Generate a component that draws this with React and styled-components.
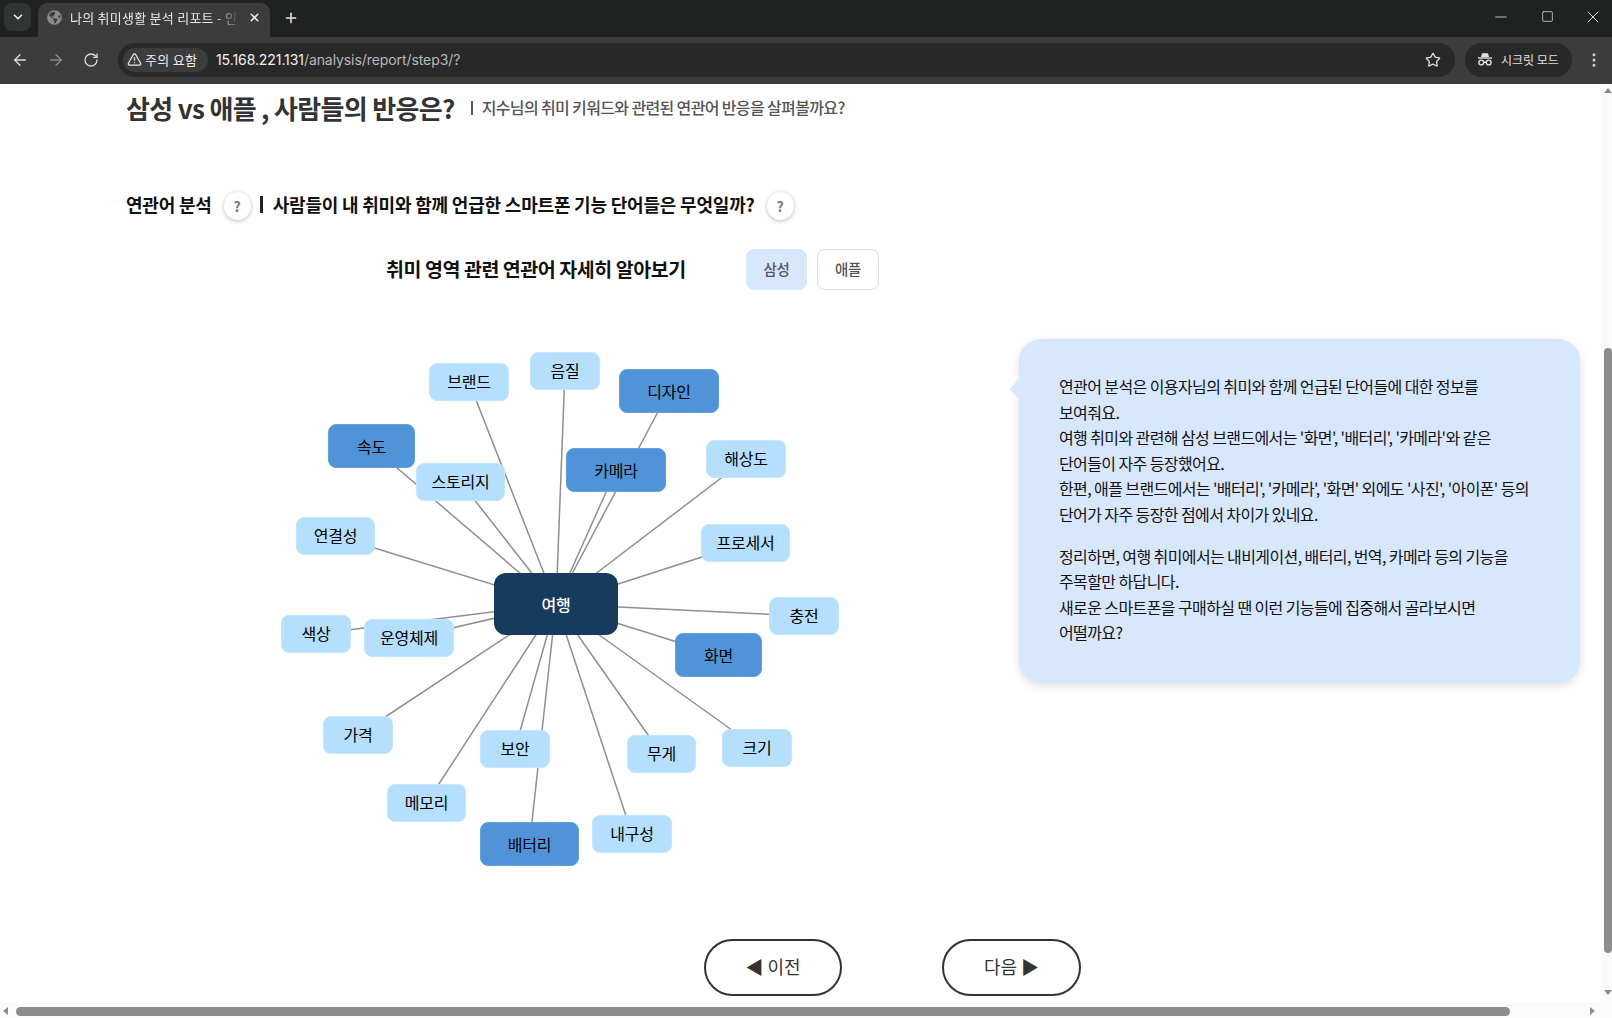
import React from 'react';
import styled, { createGlobalStyle } from 'styled-components';
import { ArrowLeft, ArrowRight, RotateCw, Star, TriangleAlert, Minus, Square, X, Plus, ChevronDown, EllipsisVertical } from 'lucide-react';
import { FaGlobeAmericas } from 'react-icons/fa';

const Global = createGlobalStyle`
  html, body { margin: 0; padding: 0; overflow: hidden; background: #fff; }
  * { box-sizing: border-box; }
  body { font-family: "Noto Sans CJK KR", "Noto Sans", sans-serif; }
`;

const Window = styled.div`
  width: 1612px; height: 1018px; display: flex; flex-direction: column; overflow: hidden;
`;
const TabStrip = styled.div`
  height: 37px; background: #202222; display: flex; align-items: flex-end; flex: none; color: #e8e8e8;
`;
const TabMenu = styled.div`
  width: 27px; height: 28px; margin: 0 7px 6px 4px; border-radius: 8px; background: #323434;
  display: flex; align-items: center; justify-content: center;
`;
const Tab = styled.div`
  width: 232px; height: 34px; background: #3c3c3c; border-radius: 9px 9px 0 0;
  display: flex; align-items: center; padding: 0 9px 5px; gap: 8px;
`;
const TabTitle = styled.div`
  flex: 1; font-size: 13px; white-space: nowrap; overflow: hidden; color: #e6e6e6; line-height: 18px; letter-spacing: 0.25px;
  -webkit-mask-image: linear-gradient(90deg, #000 86%, transparent);
  mask-image: linear-gradient(90deg, #000 86%, transparent);
`;
const NewTab = styled.div`
  margin: 0 0 11px 11px; width: 20px; display: flex; justify-content: center; flex: none;
`;
const WindowControls = styled.div`
  margin-left: auto; display: flex; align-self: flex-start; height: 33px; align-items: center;
  gap: 26px; padding-right: 9px;
`;
const ControlCell = styled.div`
  width: 20px; display: flex; justify-content: center;
`;
const Toolbar = styled.div`
  height: 47px; background: #3c3c3c; display: flex; align-items: center; flex: none; color: #d8d8d8; padding: 0 0 1px 11px;
`;
const NavIcons = styled.div`
  display: flex; gap: 18px; width: 107px; align-items: center;
`;
const Address = styled.div`
  width: 1337px; height: 34px; border-radius: 17px; background: #282828;
  display: flex; align-items: center; padding: 0 14px 0 5px;
`;
const Chip = styled.div`
  height: 24px; width: 85px; border-radius: 12px; background: #3c3c3c; color: #eee;
  display: flex; align-items: center; gap: 3px; font-size: 13px; letter-spacing: 0.3px; padding: 0 0 2px 4px; white-space: nowrap; flex: none;
`;
const Url = styled.div`
  margin: 0 0 1px 8px; font-family: "Inter", "Noto Sans", sans-serif; font-size: 14px; color: #b9b9b9; letter-spacing: -0.08px;
  b { font-weight: 400; color: #f0f0f0; }
`;
const StarWrap = styled.div`
  margin-left: auto; display: flex;
`;
const Incognito = styled.div`
  margin-left: 10px; width: 107px; height: 34px; border-radius: 17px; background: #282828; color: #e0e0e0;
  display: flex; align-items: center; gap: 8px; padding: 0 0 2px 12px; font-size: 12px; white-space: nowrap; flex: none;
`;
const MenuWrap = styled.div`
  margin-left: 13px; display: flex; color: #cfcfcf;
`;

const Viewport = styled.div`
  flex: 1; min-height: 0; display: flex; background: #fff;
`;
const Main = styled.main`
  flex: 1; min-width: 0; padding-left: 126px; overflow: hidden;
`;
const TitleRow = styled.div`
  height: 48px; display: flex; align-items: center;
`;
const Title = styled.h1`
  margin: 0; font-size: 26px; font-weight: 700; color: #333; letter-spacing: -0.68px; white-space: nowrap; line-height: 48px;
`;
const SubDivider = styled.span`
  width: 2px; height: 14px; margin: 0 9px 0 16px; background: #555; flex: none;
`;
const Subtitle = styled.span`
  font-size: 16px; font-weight: 500; color: #555; letter-spacing: -0.64px; white-space: nowrap; padding-bottom: 2px;
`;
const SectionRow = styled.div`
  margin-top: 57px; height: 32px; padding-bottom: 2px; display: flex; align-items: center; color: #111;
  font-size: 18px; font-weight: 700; letter-spacing: -0.2px; white-space: nowrap;
`;
const Help = styled.span`
  width: 27px; height: 28px; border-radius: 50%; background: #fff; color: #777;
  box-shadow: 0 1px 4px rgba(0,0,0,.28); display: inline-flex; align-items: center; justify-content: center;
  font-size: 14px; font-weight: 700; margin: 4px 0 0 ${p => p.$ml}px; letter-spacing: 0;
`;
const Divider = styled.span`
  margin: 0 10px 0 9px; width: 3px; height: 17px; background: #222;
`;
const FilterRow = styled.div`
  margin-top: 28px; height: 41px; display: flex; align-items: center; padding-left: 260px;
`;
const FilterTitle = styled.h2`
  margin: 0 0 3px; width: 360px; font-size: 19.5px; font-weight: 700; color: #111; letter-spacing: -0.45px; white-space: nowrap;
`;
const Brand = styled.button`
  width: 61px; height: 41px; margin-right: 10px; border-radius: 8px; font: inherit; font-size: 14.5px; font-weight: 500; color: #555; letter-spacing: -0.3px;
  padding: 0 0 3px;
  background: ${p => (p.$active ? '#d7e7fe' : '#fff')};
  border: 1px solid ${p => (p.$active ? '#d7e7fe' : '#dcdcdc')};
  &:last-child { width: 62px; }
`;
const ContentRow = styled.div`
  margin-top: 50px; display: flex; align-items: flex-start;
`;
const Canvas = styled.div`
  position: relative; width: 893px; height: 540px; flex: none;
`;
const Lines = styled.svg`
  position: absolute; inset: 0; width: 100%; height: 100%;
`;
const TONES = {
  light: 'background:#b5dffe;border:1px solid #c4e5ff;color:#000;border-radius:8px;padding-bottom:2px;',
  mid: 'background:#4f94d9;border:1px solid #62a0de;color:#000;border-radius:8px;',
  root: 'background:#173a5f;color:#fff;border-radius:12px;font-weight:500;',
};
const Node = styled.div`
  position: absolute; left: ${p => p.$x}px; top: ${p => p.$y}px; width: ${p => p.$w}px; height: ${p => p.$h}px;
  display: flex; align-items: center; justify-content: center; font-size: 16px; white-space: nowrap; letter-spacing: -0.2px;
  ${p => TONES[p.$tone]}
`;
const Bubble = styled.aside`
  position: relative; width: 561px; height: 344px; margin-top: -1px; padding: 35px 40px; background: #d7e7fe; border-radius: 22px;
  box-shadow: 0 3px 10px rgba(0,0,0,.12); color: #111; font-size: 16px; line-height: 25.6px; letter-spacing: -0.6px;
  &::before {
    content: ""; position: absolute; left: -7px; top: 43px; width: 14px; height: 14px; background: #d7e7fe; transform: rotate(45deg);
  }
`;
const Para = styled.p`
  margin: 0 0 16px; white-space: nowrap;
`;
const NavRow = styled.div`
  margin: 59px 0 0 578px; display: flex; gap: 100px;
`;
const NavButton = styled.button`
  width: ${p => p.$w}px; height: 57px; border-radius: 29px; background: #fff; border: 2px solid #333; color: #333;
  font: inherit; font-size: 18px; display: flex; align-items: center; justify-content: center; gap: 4px; padding: 0 0 4px;
`;
const VBar = styled.div`
  width: 11px; flex: none; background: #fafafa; display: flex; flex-direction: column; align-items: flex-end; padding-top: 4px;
`;
const Thumb = styled.div`
  background: #8c8c8c;
  ${p => (p.$v
    ? 'width:8px;height:605px;margin-top:255px;border-radius:4px;'
    : 'height:9px;width:1494px;margin-left:8px;border-radius:5px;')}
`;
const ArrowUp = styled.i`
  width: 0; height: 0; border: 4px solid transparent; border-top: 0; border-bottom: 5px solid #8c8c8c; display: block;
`;
const ArrowDown = styled.i`
  width: 0; height: 0; border: 4px solid transparent; border-bottom: 0; border-top: 5px solid #8c8c8c; display: block; margin-top: 37px;
`;
const HBar = styled.div`
  height: 15px; flex: none; background: #fafafa; display: flex; align-items: center; padding: 1px 0 0 3px;
`;
const ArrowLeftTri = styled.i`
  width: 0; height: 0; border: 4px solid transparent; border-left: 0; border-right: 5px solid #8c8c8c; display: block;
`;
const ArrowRightTri = styled.i`
  width: 0; height: 0; border: 4px solid transparent; border-right: 0; border-left: 5px solid #8c8c8c; display: block; margin-left: 80px;
`;

const ROOT = { x: 368, y: 233, w: 124, h: 62 };
const NODES = [
  ['브랜드', 429, 363, 80, 38, 'light'], ['음질', 530, 352, 70, 38, 'light'], ['디자인', 619, 369, 100, 44, 'mid'],
  ['속도', 328, 424, 87, 44, 'mid'], ['스토리지', 416, 463, 89, 38, 'light'], ['카메라', 566, 448, 100, 44, 'mid'],
  ['해상도', 706, 440, 80, 38, 'light'], ['연결성', 296, 517, 79, 38, 'light'], ['프로세서', 701, 524, 89, 38, 'light'],
  ['충전', 769, 597, 70, 38, 'light'], ['색상', 281, 615, 70, 38, 'light'], ['운영체제', 364, 619, 90, 38, 'light'],
  ['화면', 675, 633, 87, 44, 'mid'], ['가격', 323, 716, 70, 38, 'light'], ['보안', 480, 730, 70, 38, 'light'],
  ['무게', 627, 735, 69, 38, 'light'], ['크기', 722, 729, 70, 38, 'light'], ['메모리', 387, 784, 79, 38, 'light'],
  ['내구성', 592, 815, 80, 38, 'light'], ['배터리', 480, 822, 99, 44, 'mid'],
].map(([t, x, y, w, h, tone]) => ({ t, x: x - 126, y: y - 340, w, h, tone }));

const IncognitoIcon = () => (
  <svg width="16" height="16" viewBox="0 0 16 16" fill="none" stroke="currentColor" strokeWidth="1.4">
    <path d="M4 6 5 2.2h6L12 6Z" fill="currentColor" stroke="none" />
    <path d="M1 7h14" />
    <circle cx="4.3" cy="11.5" r="2.4" />
    <circle cx="11.7" cy="11.5" r="2.4" />
    <path d="M6.7 11.2h2.6" />
  </svg>
);

export default function App() {
  const cx = ROOT.x + ROOT.w / 2;
  const cy = ROOT.y + ROOT.h / 2;
  return (
    <Window>
      <Global />
      <TabStrip>
        <TabMenu><ChevronDown size={14} strokeWidth={3} /></TabMenu>
        <Tab>
          <FaGlobeAmericas size={15} color="#8b8b8b" style={{ flex: 'none' }} />
          <TabTitle>나의 취미생활 분석 리포트 - 인</TabTitle>
          <X size={13} strokeWidth={3} />
        </Tab>
        <NewTab><Plus size={16} strokeWidth={2.2} /></NewTab>
        <WindowControls>
          <ControlCell><Minus size={18} strokeWidth={1.1} /></ControlCell>
          <ControlCell><Square size={13} strokeWidth={1.3} /></ControlCell>
          <ControlCell><X size={20} strokeWidth={1.1} /></ControlCell>
        </WindowControls>
      </TabStrip>
      <Toolbar>
        <NavIcons>
          <ArrowLeft size={18} />
          <ArrowRight size={18} color="#8a8a8a" />
          <RotateCw size={16} />
        </NavIcons>
        <Address>
          <Chip><TriangleAlert size={15} />주의 요함</Chip>
          <Url><b>15.168.221.131</b>/analysis/report/step3/?</Url>
          <StarWrap><Star size={16} /></StarWrap>
        </Address>
        <Incognito><IncognitoIcon />시크릿 모드</Incognito>
        <MenuWrap><EllipsisVertical size={18} /></MenuWrap>
      </Toolbar>
      <Viewport>
        <Main>
          <TitleRow>
            <Title>삼성 vs 애플 , 사람들의 반응은?</Title>
            <SubDivider />
            <Subtitle>지수님의 취미 키워드와 관련된 연관어 반응을 살펴볼까요?</Subtitle>
          </TitleRow>
          <SectionRow>
            연관어 분석
            <Help $ml={12}>?</Help>
            <Divider />
            사람들이 내 취미와 함께 언급한 스마트폰 기능 단어들은 무엇일까?
            <Help $ml={12}>?</Help>
          </SectionRow>
          <FilterRow>
            <FilterTitle>취미 영역 관련 연관어 자세히 알아보기</FilterTitle>
            <Brand $active>삼성</Brand>
            <Brand>애플</Brand>
          </FilterRow>
          <ContentRow>
            <Canvas>
              <Lines>
                {NODES.map(n => (
                  <line key={n.t} x1={cx} y1={cy} x2={n.x + n.w / 2} y2={n.y + n.h / 2} stroke="#8f8f8f" strokeWidth="1.5" />
                ))}
              </Lines>
              <Node $x={ROOT.x} $y={ROOT.y} $w={ROOT.w} $h={ROOT.h} $tone="root">여행</Node>
              {NODES.map(n => (
                <Node key={n.t} $x={n.x} $y={n.y} $w={n.w} $h={n.h} $tone={n.tone}>{n.t}</Node>
              ))}
            </Canvas>
            <Bubble>
              <Para>
                연관어 분석은 이용자님의 취미와 함께 언급된 단어들에 대한 정보를<br />
                보여줘요.<br />
                여행 취미와 관련해 삼성 브랜드에서는 '화면', '배터리', '카메라'와 같은<br />
                단어들이 자주 등장했어요.<br />
                한편, 애플 브랜드에서는 '배터리', '카메라', '화면' 외에도 '사진', '아이폰' 등의<br />
                단어가 자주 등장한 점에서 차이가 있네요.
              </Para>
              <Para>
                정리하면, 여행 취미에서는 내비게이션, 배터리, 번역, 카메라 등의 기능을<br />
                주목할만 하답니다.<br />
                새로운 스마트폰을 구매하실 땐 이런 기능들에 집중해서 골라보시면<br />
                어떨까요?
              </Para>
            </Bubble>
          </ContentRow>
          <NavRow>
            <NavButton $w={138}>◀ 이전</NavButton>
            <NavButton $w={139}>다음 ▶</NavButton>
          </NavRow>
        </Main>
        <VBar>
          <ArrowUp />
          <Thumb $v />
          <ArrowDown />
        </VBar>
      </Viewport>
      <HBar>
        <ArrowLeftTri />
        <Thumb />
        <ArrowRightTri />
      </HBar>
    </Window>
  );
}
